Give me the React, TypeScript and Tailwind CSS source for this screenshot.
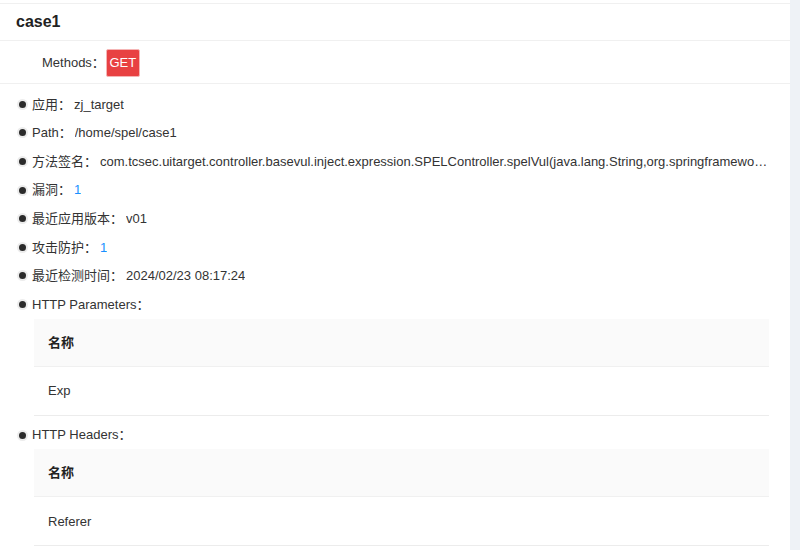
import React from "react";

const font = { fontFamily: '"Liberation Sans", "Noto Sans CJK SC", Arial, sans-serif' };

function Dot() {
  return (
    <span className="mr-[6px] ml-[19px] inline-block h-[7px] w-[7px] shrink-0 rounded-full bg-[#2b2b2b] shadow-[0_0_0_2px_#ececec]" />
  );
}

function Row({ label, value, blue }: { label: string; value?: string; blue?: boolean }) {
  return (
    <div className="flex h-[28.6px] items-center pr-[22px]">
      <Dot />
      <span className="shrink-0 text-[#333]">{label}</span>
      {value !== undefined && (
        <span className={"ml-[3px] min-w-0 truncate " + (blue ? "text-[#1890ff]" : "text-[#333]")}>{value}</span>
      )}
    </div>
  );
}

function Table({ value }: { value: string }) {
  return (
    <div className="ml-[34px] w-[735px]">
      <div className="flex h-[48px] items-center border-b border-[#f0f0f0] bg-[#fafafa] pl-[14px] font-bold text-[#222]">名称</div>
      <div className="flex h-[49px] items-center border-b border-[#ececec] pl-[14px] text-[#333]">{value}</div>
    </div>
  );
}

export default function App() {
  return (
    <div className="flex h-[550px] w-[800px] overflow-hidden bg-white text-[13px]" style={font}>
      <div className="w-[790px] shrink-0">
        <div className="h-[3px] bg-white" />
        <div className="flex h-[38px] items-center border-y border-[#f0f0f0] pl-[16px] text-[16px] font-bold text-[#222]">case1</div>
        <div className="flex h-[43px] items-center border-b border-[#f0f0f0] pl-[42px] pt-[1px]">
          <span className="text-[#333]">Methods：</span>
          <span className="ml-[1px] flex h-[28px] w-[34px] items-center justify-center rounded-[2px] border border-[#f5b5b5] bg-[#e84142] text-[13px] text-white">GET</span>
        </div>
        <div className="pt-[6px]">
          <Row label="应用：" value="zj_target" />
          <Row label="Path：" value="/home/spel/case1" />
          <Row label="方法签名：" value="com.tcsec.uitarget.controller.basevul.inject.expression.SPELController.spelVul(java.lang.String,org.springframework.web.context.request.WebRequest)" />
          <Row label="漏洞：" value="1" blue />
          <Row label="最近应用版本：" value="v01" />
          <Row label="攻击防护：" value="1" blue />
          <Row label="最近检测时间：" value="2024/02/23 08:17:24" />
          <Row label="HTTP Parameters：" />
          <Table value="Exp" />
          <div className="mt-[5px]">
            <Row label="HTTP Headers：" />
          </div>
          <Table value="Referer" />
        </div>
      </div>
      <div className="flex-1 bg-[#eef2f6]" />
    </div>
  );
}
